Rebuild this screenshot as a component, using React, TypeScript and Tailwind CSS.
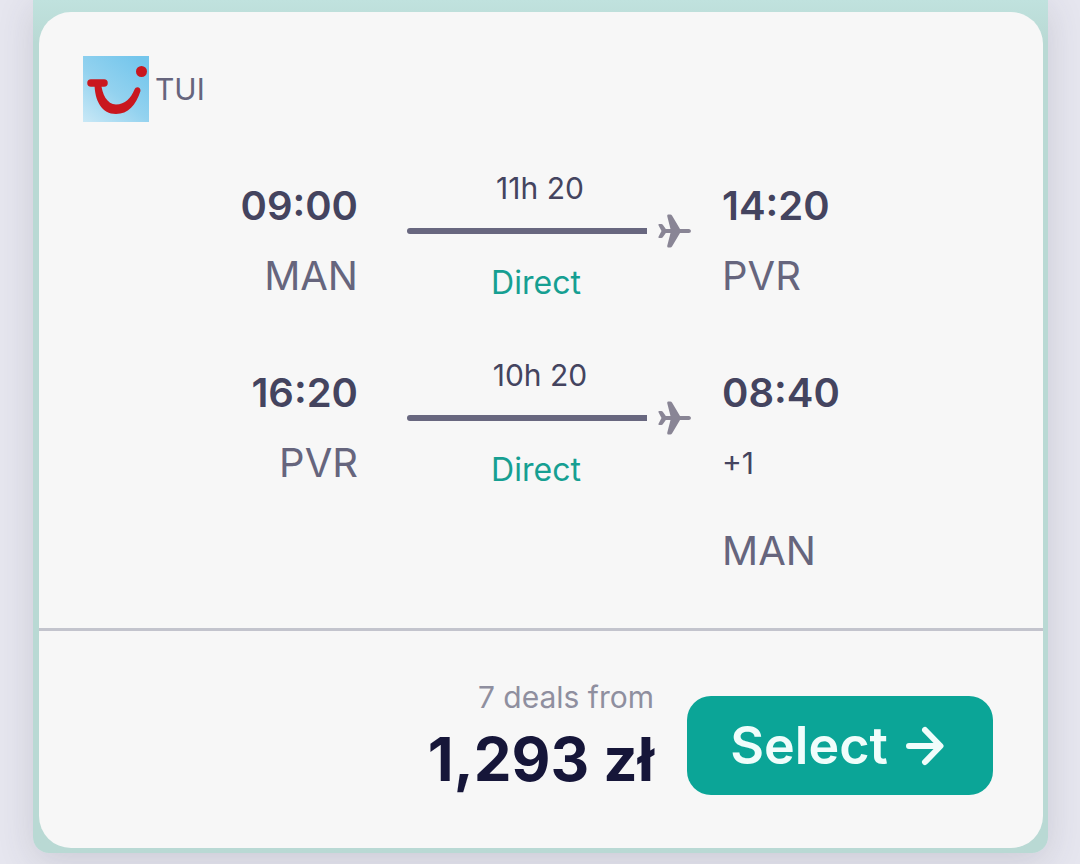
interface Leg {
  departTime: string;
  departCode: string;
  duration: string;
  stops: string;
  arriveTime: string;
  arriveCode: string;
  dayOffset?: string;
}

const legs: Leg[] = [
  {
    departTime: '09:00',
    departCode: 'MAN',
    duration: '11h 20',
    stops: 'Direct',
    arriveTime: '14:20',
    arriveCode: 'PVR'
  },
  {
    departTime: '16:20',
    departCode: 'PVR',
    duration: '10h 20',
    stops: 'Direct',
    arriveTime: '08:40',
    arriveCode: 'MAN',
    dayOffset: '+1'
  }
];

function TuiLogo() {
  return (
    <svg viewBox="0 0 66 66" className="size-[66px]" aria-hidden="true">
      <defs>
        <linearGradient id="sky" x1="0" y1="1" x2="0.8" y2="0">
          <stop offset="0" stopColor="#c9e8f6" />
          <stop offset="0.5" stopColor="#93d2ef" />
          <stop offset="1" stopColor="#74c6ec" />
        </linearGradient>
      </defs>
      <rect width="66" height="66" fill="url(#sky)" />
      <path d="M8 27H21" stroke="#c9171e" strokeWidth="7.5" strokeLinecap="round" />
      <path
        d="M11.500 27H18C19 38 24 48.500 33 48.500C42 48.500 48 42 51.500 33.500C53 29.500 58 31 57.500 35C53 49 45 58 33 58C19 58 11.500 45 11.500 27Z"
        fill="#c9171e"
      />
      <circle cx="58.500" cy="15.500" r="5.500" fill="#c9171e" />
    </svg>
  );
}

function Plane() {
  return (
    <svg viewBox="0 0 33 34" className="h-[34px] w-[33px] shrink-0" fill="#898595" aria-hidden="true">
      <path d="M0.500 11.200C0.200 10.500 0.500 10 1.200 10H3.400C4 10 4.400 10.200 4.800 10.700L7.800 15H12.500L9.300 2.500C9 1.200 9.600 0.500 10.600 0.500H12.200C13 0.500 13.600 0.900 14 1.600L22 15H30.800C33.600 15 33.600 19 30.800 19H22L14 32.400C13.600 33.100 13 33.500 12.200 33.500H10.600C9.600 33.500 9 32.800 9.300 31.500L12.500 19H7.800L4.800 23.300C4.400 23.800 4 24 3.400 24H1.200C0.500 24 0.200 23.500 0.500 22.800L3.500 17Z" />
    </svg>
  );
}

function FlightLeg({ leg }: { leg: Leg }) {
  return (
    <div className="grid grid-cols-[1fr_266px_1fr] gap-x-[49px]">
      <div className="pt-[3px] text-right text-[40px] leading-[70px]">
        <p className="font-semibold text-[#44445f]">{leg.departTime}</p>
        <p className="text-[#66657d]">{leg.departCode}</p>
      </div>

      <div className="text-center text-[30px] leading-10">
        <p className="text-[#44445f]">{leg.duration}</p>
        <div className="-mr-[18px] flex h-[55px] items-center gap-[11px] pb-[9px]">
          <div className="h-1.5 flex-1 rounded-l-full bg-[#68677f]"></div>
          <Plane />
        </div>
        <p className="pr-2 text-[32px] leading-10 text-[#169f92]">{leg.stops}</p>
      </div>

      <div className="pt-[3px] text-[40px] leading-[70px]">
        <p className="font-semibold text-[#44445f]">{leg.arriveTime}</p>
        {leg.dayOffset && <p className="mb-[18px] text-[30px] leading-[70px] text-[#44445f]">{leg.dayOffset}</p>}
        <p className="text-[#66657d]">{leg.arriveCode}</p>
      </div>
    </div>
  );
}

export default function App() {
  return (
    <main className="min-h-screen bg-[#e6e6ef] pr-8 pb-[11px] pl-[33px] font-['Inter',sans-serif]">
      <div className="rounded-b-2xl bg-linear-to-b from-[#c0e2de] via-[#b9d9d4] via-5% to-[#b9d9d4] pt-3 pr-[5px] pb-[5px] pl-1.5 shadow-[0_8px_36px_rgba(60,60,80,0.16)]">
        <article className="rounded-4xl bg-[#f7f7f7]">
          <div className="pt-11 pr-[46px] pb-[42px] pl-11">
            <div className="flex items-center gap-1.5">
              <TuiLogo />
              <span className="text-[30px] leading-10 text-[#66657d]">TUI</span>
            </div>
            <div className="mt-[46px] space-y-11">
              {legs.map((leg) => (
                <FlightLeg key={leg.departTime} leg={leg} />
              ))}
            </div>
          </div>

          {/* Price and action */}
          <div className="flex items-start justify-end gap-[33px] border-t-3 border-[#c3c4cd] pt-11 pr-[50px] pb-[49px]">
            <div className="text-right">
              <p className="text-[30px] leading-11 text-[#8f8f9f]">7 deals from</p>
              <p className="text-[60px] leading-[80px] font-bold text-[#161639]">1,293 zł</p>
            </div>
            <button
              type="button"
              className="mt-[21px] flex h-[99px] w-[306px] items-center justify-center gap-[18px] rounded-3xl bg-[#0ba597] pr-1.5 text-[52px] leading-none font-semibold text-[#f0fdfb]"
            >
              Select
              <svg viewBox="0 0 38 40" className="h-10 w-[38px]" fill="none" stroke="currentColor" strokeWidth="6" strokeLinecap="round" strokeLinejoin="round" aria-hidden="true">
                <path d="M3 20H34M19 4L34.500 20L19 36" />
              </svg>
            </button>
          </div>
        </article>
      </div>
    </main>
  );
}
